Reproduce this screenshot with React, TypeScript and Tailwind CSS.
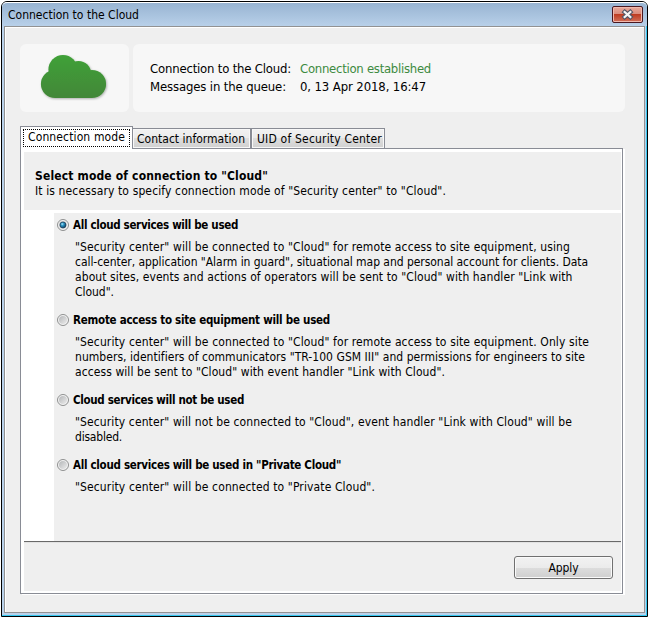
import { useLayoutEffect, useRef } from "react";

type LineProps = { w: number; className?: string; children: string };

/** A single line of text, tracked so that it fills the given width. */
function Line({ w, className = "", children }: LineProps) {
  const ref = useRef<HTMLSpanElement>(null);
  useLayoutEffect(() => {
    const el = ref.current;
    if (!el) return;
    el.style.letterSpacing = "0px";
    const natural = el.getBoundingClientRect().width;
    el.style.letterSpacing = (w - natural) / children.length + "px";
  }, [w, children]);
  return (
    <span ref={ref} className={"block w-max whitespace-pre " + className}>
      {children}
    </span>
  );
}

function Radio({ checked = false }: { checked?: boolean }) {
  return (
    <svg className="mt-[1px] h-3 w-3 shrink-0" viewBox="0 0 12 12">
      <defs>
        <linearGradient id="radioRing" x1="0" y1="0" x2="1" y2="1">
          <stop offset="0" stopColor="#b4b6b8" />
          <stop offset="1" stopColor="#ececec" />
        </linearGradient>
        <radialGradient id="radioDot" cx="0.38" cy="0.35" r="0.7">
          <stop offset="0" stopColor="#b4e6f8" />
          <stop offset="0.35" stopColor="#2f9ac9" />
          <stop offset="1" stopColor="#0a3556" />
        </radialGradient>
      </defs>
      <circle cx="6" cy="6" r="5.5" fill="#f4f4f4" stroke="#8e8f8f" />
      <circle cx="6" cy="6" r="4" fill="url(#radioRing)" />
      {checked && <circle cx="6" cy="6" r="3" fill="url(#radioDot)" stroke="#173d5c" strokeWidth="0.7" />}
    </svg>
  );
}

type Option = { title: string; titleWidth: number; gap: string; lines: [string, number][] };

const options: Option[] = [
  {
    title: "All cloud services will be used",
    titleWidth: 165,
    gap: "mb-[13px]",
    lines: [
      ['"Security center" will be connected to "Cloud" for remote access to site equipment, using', 495],
      ['call-center, application "Alarm in guard", situational map and personal account for clients. Data', 513],
      ['about sites, events and actions of operators will be sent to "Cloud" with handler "Link with', 497.5],
      ['Cloud".', 39],
    ],
  },
  {
    title: "Remote access to site equipment will be used",
    titleWidth: 257,
    gap: "mb-[13px]",
    lines: [
      ['"Security center" will be connected to "Cloud" for remote access to site equipment. Only site', 514],
      ['numbers, identifiers of communicators "TR-100 GSM III" and permissions for engineers to site', 510],
      ['access will be sent to "Cloud" with event handler "Link with Cloud".', 370],
    ],
  },
  {
    title: "Cloud services will not be used",
    titleWidth: 171,
    gap: "mb-[13px]",
    lines: [
      ['"Security center" will not be connected to "Cloud", event handler "Link with Cloud" will be', 497],
      ["disabled.", 47],
    ],
  },
  {
    title: 'All cloud services will be used in "Private Cloud"',
    titleWidth: 268,
    gap: "",
    lines: [['"Security center" will be connected to "Private Cloud".', 300]],
  },
];

function Cloud() {
  return (
    <svg className="h-[68px] w-[109px]" viewBox="20 44 109 68">
      <defs>
        <linearGradient id="cloudFill" gradientUnits="userSpaceOnUse" x1="0" y1="55" x2="0" y2="98">
          <stop offset="0" stopColor="#40a138" />
          <stop offset="1" stopColor="#438738" />
        </linearGradient>
        <filter id="cloudShadow" x="-10%" y="-10%" width="125%" height="130%">
          <feDropShadow dx="0.8" dy="1" stdDeviation="1" floodColor="#000" floodOpacity="0.3" />
        </filter>
      </defs>
      <g filter="url(#cloudShadow)" fill="url(#cloudFill)">
        <circle cx="63" cy="69.5" r="14.6" />
        <circle cx="78.5" cy="73.5" r="12.6" />
        <circle cx="92" cy="84" r="14.1" />
        <circle cx="55" cy="84" r="14.1" />
        <rect x="55" y="72" width="37" height="26" />
      </g>
    </svg>
  );
}

export default function App() {
  return (
    <div className="h-[617px] w-[648px] overflow-hidden bg-white pt-px pl-px font-['DejaVu_Sans_Condensed','DejaVu_Sans',sans-serif] text-[12px] leading-[15px] text-black [font-stretch:condensed]">
      <div className="flex h-[616px] w-[647px] flex-col rounded-t-[6px] border border-black bg-[#b9d1ea] shadow-[inset_-1px_-1px_0_#35c8f0]">
        <header className="flex h-[24px] shrink-0 items-start justify-between rounded-t-[5px] border-t border-white bg-linear-to-b from-[#98b4d2] to-[#b8d0e9] pr-[4px] pl-[6px]">
          <Line w={131} className="mt-[5px]">Connection to the Cloud</Line>
          <button className="mt-[3px] flex h-[17px] w-[31px] items-center justify-center rounded-[2px] border border-[#4a1820] bg-[linear-gradient(#e9a99b_0%,#d98a7b_48%,#be3c22_50%,#d2705a_100%)] shadow-[inset_0_0_0_1px_#f0b9ae]">
            <svg className="h-[11px] w-[13px]" viewBox="0 0 13 11">
              <path d="M3.7 3L9.3 8M9.3 3L3.7 8" stroke="#535666" strokeWidth="4.4" strokeLinecap="square" />
              <path d="M3.7 3L9.3 8M9.3 3L3.7 8" stroke="#f5f5f5" strokeWidth="2.3" strokeLinecap="square" />
            </svg>
          </button>
        </header>

        <main className="mr-[2px] ml-[2px] flex h-[587px] flex-col border border-[#929292] bg-[#efefef] px-[15px] pt-[17px] shadow-[inset_1px_1px_0_#fff]">
          <section className="flex gap-1">
            <div className="h-[68px] w-[109px] rounded-[6px] bg-[#f7f7f7]">
              <Cloud />
            </div>
            <div className="grid h-[68px] w-[492px] grid-cols-[150px_auto] content-start rounded-[6px] bg-[#f7f7f7] pt-[16px] pl-[17px] text-[13px] leading-[18px]">
              <Line w={141}>Connection to the Cloud:</Line>
              <Line w={131} className="text-[#3c8a40]">Connection established</Line>
              <Line w={136}>Messages in the queue:</Line>
              <Line w={126}>0, 13 Apr 2018, 16:47</Line>
            </div>
          </section>

          <nav className="relative z-10 mt-[14px] -mb-px flex h-[23px] items-end">
            <div className="h-[23px] w-[113px] border border-b-0 border-[#898c95] bg-white p-[2px]">
              <div className="h-[18px] border border-dotted border-black pl-[4px]">
                <Line w={97}>Connection mode</Line>
              </div>
            </div>
            <div className="h-[21px] w-[118px] border border-l-0 border-[#898c95] bg-[linear-gradient(#f2f2f2_0%,#ebebeb_45%,#dedede_50%,#d0d0d0_100%)] pt-[3px] pl-[4px] shadow-[inset_0_0_0_1px_#f8f8f8]">
              <Line w={108}>Contact information</Line>
            </div>
            <div className="h-[21px] w-[134px] border border-[#898c95] bg-[linear-gradient(#f2f2f2_0%,#ebebeb_45%,#dedede_50%,#d0d0d0_100%)] pt-[3px] pl-[5px] shadow-[inset_0_0_0_1px_#f8f8f8]">
              <Line w={125}>UID of Security Center</Line>
            </div>
          </nav>

          <section className="flex h-[446px] w-[603px] flex-col border border-[#898c95] bg-white pt-[3px] pr-px pl-[3px] shadow-[2px_1px_0_#fff]">
            <div className="h-[58px] bg-[#efefef] pt-[17px] pl-[11px]">
              <Line w={233} className="font-bold">{'Select mode of connection to "Cloud"'}</Line>
              <Line w={411}>{'It is necessary to specify connection mode of "Security center" to "Cloud".'}</Line>
            </div>
            <div className="mt-[3px] ml-[30px] h-[328px] bg-[#efefef] pt-[5px] pl-[3px]">
              {options.map((o, i) => (
                <div key={o.title} className={o.gap}>
                  <div className="flex h-[14px] items-start gap-[4px]">
                    <Radio checked={i === 0} />
                    <Line w={o.titleWidth} className="text-[11.5px] leading-[15px] font-bold">{o.title}</Line>
                  </div>
                  <div className="mt-[8px] ml-[18px]">
                    {o.lines.map(([text, w]) => (
                      <Line key={text} w={w}>{text}</Line>
                    ))}
                  </div>
                </div>
              ))}
            </div>
            <footer className="flex h-[50px] justify-end border-t border-[#696969] bg-[#efefef] pt-[14px] pr-[8px] shadow-[inset_0_1px_0_#e2e2e2]">
              <button className="flex h-[23px] w-[99px] items-center justify-center rounded-[3px] border border-[#707070] bg-[linear-gradient(#f2f2f2_0%,#ebebeb_50%,#dddddd_50%,#cfcfcf_100%)] pt-[2px] shadow-[inset_0_0_0_1px_#fafafa]">
                <Line w={30}>Apply</Line>
              </button>
            </footer>
          </section>
        </main>
      </div>
    </div>
  );
}
